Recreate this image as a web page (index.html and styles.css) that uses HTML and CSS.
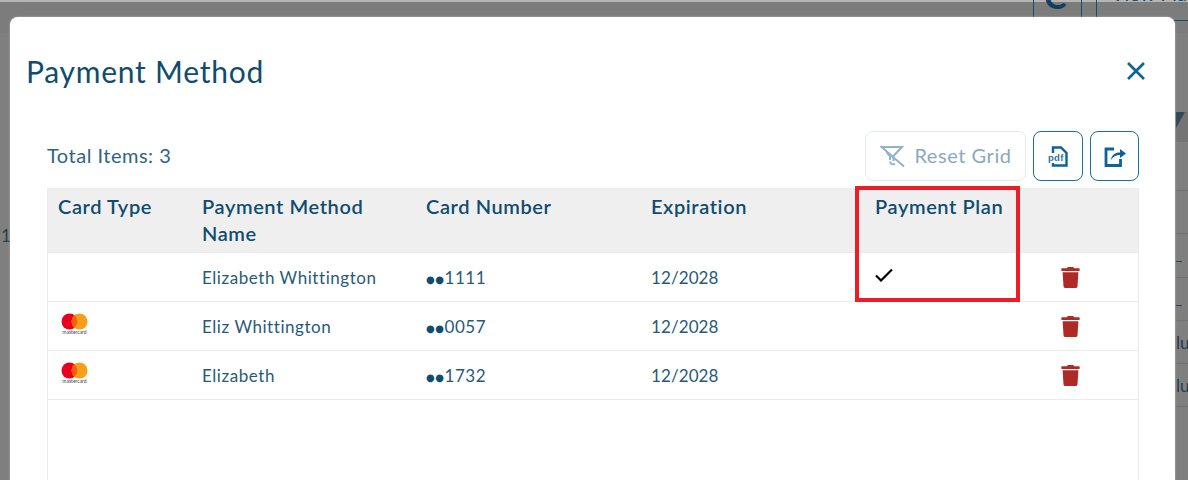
FILE: index.html
```html
<!DOCTYPE html>
<html lang="en">
<head>
    <meta charset="UTF-8">
    <meta name="viewport" content="width=device-width, initial-scale=1.0">
    <title>Payment Method</title>
    <link rel="stylesheet" href="styles.css">
</head>
<body>
    <!-- bits of the page behind the overlay -->
    <div class="behind">
        <div class="behind-top"></div>
        <div class="behind-head"></div>
        <div class="behind-band"></div>
        <div class="behind-filter"></div>
        <div class="behind-btn behind-btn1"><span class="behind-c">C</span></div>
        <div class="behind-btn behind-btn2"><span class="behind-view">View Pla</span></div>
        <div class="behind-rule"></div>
        <div class="behind-one">1</div>
        <div class="behind-line behind-line1"></div>
        <div class="behind-line behind-line2"></div>
        <div class="behind-line behind-line3"></div>
        <div class="behind-line behind-line4"></div>
        <div class="behind-line behind-line5"></div>
        <div class="behind-line behind-line6"></div>
        <div class="behind-dash behind-dash1"></div>
        <div class="behind-dash behind-dash2"></div>
        <div class="behind-txt behind-txt3">lu</div>
        <div class="behind-txt behind-txt4">lu</div>
    </div>

    <div class="modal">
        <div class="modal-head">
            <h1 class="modal-title">Payment Method</h1>
            <svg class="close-icon" viewBox="0 0 20 20" width="20" height="20">
                <path d="M2 2L18 18M18 2L2 18" fill="none" stroke="#0d6296" stroke-width="2.6"/>
            </svg>
        </div>

        <div class="toolbar">
            <div class="total">Total Items: 3</div>
            <div class="tools">
                <div class="btn btn-reset">
                    <svg viewBox="0 0 26 24" width="26" height="24">
                        <path d="M2 3H23L14.500 12V17M7.500 8L11 12V16" fill="none" stroke="#8fb3cb" stroke-width="2"/>
                        <path d="M1.500 2L25 22.500" fill="none" stroke="#8fb3cb" stroke-width="2"/>
                        <path d="M11 17.500C11.500 20.500 14 21 16 19.500" fill="none" stroke="#8fb3cb" stroke-width="1.800"/>
                    </svg>
                    <span class="btn-label">Reset Grid</span>
                </div>
                <div class="btn btn-icon">
                    <svg viewBox="0 0 20 21" width="20" height="21">
                        <path d="M5 7V1.500H13L18.500 7V19.500H5V17" fill="none" stroke="#0d6296" stroke-width="2.400"/>
                        <text x="0" y="14.500" class="pdf-text">pdf</text>
                    </svg>
                </div>
                <div class="btn btn-icon btn-export">
                    <svg viewBox="0 0 22 21" width="22" height="21">
                        <path d="M10 3H2V19.500H16.500V13" fill="none" stroke="#0d6296" stroke-width="2.800"/>
                        <path d="M7 14C7.500 9 11 6.500 16 6.500V3L22 7.500L16 12V9C12 9 9 10.500 7 14Z" fill="#0d6296"/>
                    </svg>
                </div>
            </div>
        </div>

        <div class="grid-wrap">
            <div class="grid">
                <div class="row row-head">
                    <div class="cell">Card Type</div>
                    <div class="cell">Payment Method Name</div>
                    <div class="cell">Card Number</div>
                    <div class="cell">Expiration</div>
                    <div class="cell">Payment Plan</div>
                    <div class="cell"></div>
                </div>
                <div class="row">
                    <div class="cell"></div>
                    <div class="cell">Elizabeth Whittington</div>
                    <div class="cell cell-num"><span class="dots">●●</span>1111</div>
                    <div class="cell cell-date">12/2028</div>
                    <div class="cell">
                        <svg class="check" viewBox="0 0 18 14" width="18" height="14">
                            <path d="M1 7.500L6 12.500L17 1.500" fill="none" stroke="#000" stroke-width="2.200"/>
                        </svg>
                    </div>
                    <div class="cell cell-del">
                        <svg class="trash" viewBox="0 0 448 512"><path d="M432 32H312l-9.400-18.700A24 24 0 0 0 281.100 0H166.800a23.720 23.720 0 0 0-21.400 13.300L136 32H16A16 16 0 0 0 0 48v32a16 16 0 0 0 16 16h416a16 16 0 0 0 16-16V48a16 16 0 0 0-16-16zM53.200 467a48 48 0 0 0 47.900 45h245.800a48 48 0 0 0 47.900-45L416 128H32z"/></svg>
                    </div>
                </div>
                <div class="row">
                    <div class="cell">
                        <div class="mc">
                            <svg viewBox="0 0 27 17" width="27" height="17">
                                <circle cx="8.500" cy="8.500" r="8" fill="#eb001b"/>
                                <circle cx="18.500" cy="8.500" r="8" fill="#f79e1b"/>
                                <path d="M13.500 2.300a8 8 0 0 1 0 12.400a8 8 0 0 1 0-12.400z" fill="#ff5f00"/>
                            </svg>
                            <span class="mc-name">mastercard</span>
                        </div>
                    </div>
                    <div class="cell">Eliz Whittington</div>
                    <div class="cell cell-num"><span class="dots">●●</span>0057</div>
                    <div class="cell cell-date">12/2028</div>
                    <div class="cell"></div>
                    <div class="cell cell-del">
                        <svg class="trash" viewBox="0 0 448 512"><path d="M432 32H312l-9.400-18.700A24 24 0 0 0 281.100 0H166.800a23.720 23.720 0 0 0-21.400 13.300L136 32H16A16 16 0 0 0 0 48v32a16 16 0 0 0 16 16h416a16 16 0 0 0 16-16V48a16 16 0 0 0-16-16zM53.200 467a48 48 0 0 0 47.900 45h245.800a48 48 0 0 0 47.900-45L416 128H32z"/></svg>
                    </div>
                </div>
                <div class="row">
                    <div class="cell">
                        <div class="mc">
                            <svg viewBox="0 0 27 17" width="27" height="17">
                                <circle cx="8.500" cy="8.500" r="8" fill="#eb001b"/>
                                <circle cx="18.500" cy="8.500" r="8" fill="#f79e1b"/>
                                <path d="M13.500 2.300a8 8 0 0 1 0 12.400a8 8 0 0 1 0-12.400z" fill="#ff5f00"/>
                            </svg>
                            <span class="mc-name">mastercard</span>
                        </div>
                    </div>
                    <div class="cell">Elizabeth</div>
                    <div class="cell cell-num"><span class="dots">●●</span>1732</div>
                    <div class="cell cell-date">12/2028</div>
                    <div class="cell"></div>
                    <div class="cell cell-del">
                        <svg class="trash" viewBox="0 0 448 512"><path d="M432 32H312l-9.400-18.700A24 24 0 0 0 281.100 0H166.800a23.720 23.720 0 0 0-21.400 13.300L136 32H16A16 16 0 0 0 0 48v32a16 16 0 0 0 16 16h416a16 16 0 0 0 16-16V48a16 16 0 0 0-16-16zM53.200 467a48 48 0 0 0 47.900 45h245.800a48 48 0 0 0 47.900-45L416 128H32z"/></svg>
                    </div>
                </div>
            </div>
            <!-- red annotation drawn over the screenshot -->
            <div class="highlight"></div>
        </div>
    </div>
</body>
</html>
```

FILE: styles.css
```css
html, body {
    height: 100%;
    overflow: hidden;
}
body {
    margin: 0;
    background: #7f7f7f;
    font-family: "Lato", "Open Sans", sans-serif;
    color: #285a78;
}

/* page behind the overlay */
.behind-top {
    position: absolute;
    left: 0;
    top: 0;
    width: 100%;
    height: 2px;
    background: #b5b5b5;
}
.behind-head {
    position: absolute;
    left: 0;
    top: 2px;
    width: 100%;
    height: 31px;
    background: #7c7c7c;
}
.behind-band {
    position: absolute;
    left: 1176px;
    top: 112px;
    width: 12px;
    height: 30px;
    background: #747474;
}
.behind-filter {
    position: absolute;
    left: 1176px;
    top: 112px;
    width: 9px;
    height: 16px;
    background: #324a58;
    clip-path: polygon(0 0, 100% 0, 0 100%);
}
.behind-btn {
    position: absolute;
    top: 0;
    height: 17px;
    border: 1px solid #1d4a66;
    border-top: 0;
    border-bottom: 0;
    overflow: hidden;
    box-sizing: border-box;
}
.behind-btn1 {
    left: 1033px;
    width: 49px;
}
.behind-btn2 {
    left: 1096px;
    width: 92px;
    border-right: 0;
}
.behind-c {
    display: block;
    margin: -24px 0 0 10px;
    font-size: 34px;
    line-height: 40px;
    font-weight: 700;
    color: #123f5c;
}
.behind-view {
    display: block;
    margin: -19px 0 0 14px;
    font-size: 20px;
    line-height: 24px;
    color: #1d4a66;
    white-space: nowrap;
}
.behind-rule {
    position: absolute;
    left: 1172px;
    top: 20px;
    width: 16px;
    height: 1px;
    background: #1d4a66;
}
.behind-one {
    position: absolute;
    left: 1px;
    top: 225px;
    font-size: 17px;
    color: #2c3e48;
}
.behind-line {
    position: absolute;
    left: 1176px;
    width: 12px;
    height: 1px;
    background: #717171;
}
.behind-line1 { top: 190px; }
.behind-line2 { top: 233px; }
.behind-line3 { top: 277px; }
.behind-line4 { top: 320px; }
.behind-line5 { top: 363px; }
.behind-line6 { top: 406px; }
.behind-dash {
    position: absolute;
    left: 1176px;
    width: 6px;
    height: 1px;
    background: #2c4454;
}
.behind-dash1 { top: 261px; }
.behind-dash2 { top: 305px; }
.behind-txt {
    position: absolute;
    left: 1176px;
    font-size: 17px;
    color: #24404f;
}
.behind-txt3 { top: 332px; }
.behind-txt4 { top: 375px; }

/* modal */
.modal {
    position: absolute;
    left: 10px;
    top: 17px;
    width: 1165px;
    height: 463px;
    box-sizing: border-box;
    padding: 0 36px 0 37px;
    background: #fff;
    border-radius: 8px 8px 0 0;
    overflow: hidden;
    box-shadow: 0 0 2px rgba(255,255,255,0.5);
}
.modal-head {
    display: flex;
    justify-content: space-between;
    align-items: center;
    height: 108px;
    margin-left: -21px;
    margin-right: -7px;
}
.modal-title {
    margin: 0;
    font-size: 30px;
    font-weight: 400;
    line-height: 38px;
    letter-spacing: 0.75px;
    color: #0f4c6f;
}
.close-icon {
    display: block;
}

.toolbar {
    display: flex;
    justify-content: space-between;
    align-items: center;
    height: 50px;
    margin-top: 6px;
    margin-bottom: 7px;
}
.total {
    margin-top: -2px;
    font-size: 20px;
    letter-spacing: 0.5px;
    color: #2f6484;
}
.tools {
    display: flex;
    gap: 7px;
}
.btn {
    display: flex;
    justify-content: center;
    align-items: center;
    box-sizing: border-box;
    height: 50px;
    border-radius: 8px;
    background: #fff;
}
.btn-reset {
    gap: 9px;
    width: 161px;
    border: 1px solid #e4ebef;
    font-size: 20px;
    letter-spacing: 0.55px;
    color: #8ba9bd;
}
.btn-label {
    margin-top: -3px;
}
.btn-icon {
    width: 50px;
    border: 1px solid #1a6fa3;
}
.btn-export {
    width: 49px;
}
.pdf-text {
    font-family: "Liberation Sans", sans-serif;
    font-size: 9.5px;
    font-weight: 700;
    letter-spacing: 0.3px;
    fill: #0d6296;
    stroke: #fff;
    stroke-width: 0.1px;
}

.grid-wrap {
    position: relative;
    height: 400px;
}
.grid {
    height: 100%;
    box-sizing: border-box;
    border: 1px solid #ebebeb;
    border-top: 0;
}
.row {
    display: grid;
    grid-template-columns: 144px 224px 225px 224px 175px 1fr;
    height: 49px;
    align-items: center;
    border-bottom: 1px solid #ebebeb;
    box-sizing: border-box;
    font-size: 17px;
    letter-spacing: 0.55px;
}
.row-head {
    height: 65px;
    align-items: start;
    padding-top: 5px;
    background: #efefef;
    font-size: 20px;
    font-weight: 600;
    line-height: 27px;
    letter-spacing: 0.6px;
    color: #0f4c6f;
}
.cell {
    padding-left: 10px;
    padding-right: 20px;
}
.cell-num {
    letter-spacing: 0.6px;
}
.cell-date {
    letter-spacing: 0.1px;
}
.dots {
    font-family: "DejaVu Sans", sans-serif;
    font-size: 10px;
    letter-spacing: 0.5px;
    color: #0f4c6f;
    vertical-align: 1px;
}
.cell-del {
    padding-left: 21px;
    display: flex;
    align-items: center;
}
.trash {
    display: block;
    width: 19px;
    height: 21px;
    fill: #b02a25;
}
.check {
    display: block;
    margin-top: -4px;
}
.mc {
    display: flex;
    flex-direction: column;
    width: 27px;
    margin-top: -4px;
    margin-left: 3px;
}
.mc-name {
    font-size: 5px;
    line-height: 5px;
    letter-spacing: 0;
    color: #444;
    text-align: center;
}
.highlight {
    position: absolute;
    left: 808px;
    top: -2px;
    width: 165px;
    height: 116px;
    box-sizing: border-box;
    border: 4px solid #ee1c25;
}
```
